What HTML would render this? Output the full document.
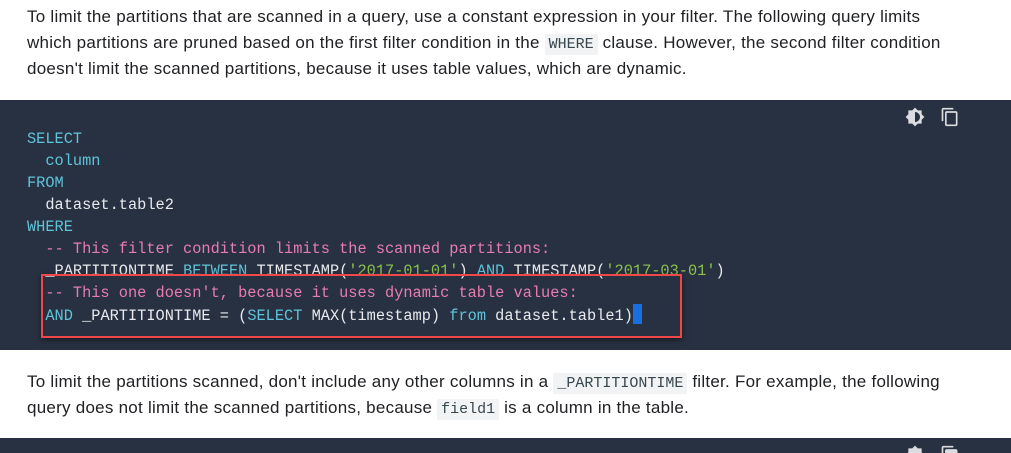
<!DOCTYPE html>
<html><head><meta charset="utf-8"><style>
*{margin:0;padding:0;box-sizing:border-box}
body{width:1011px;height:453px;overflow:hidden;background:#fff;font-family:"Liberation Sans",Roboto,sans-serif;color:#3c4043;position:relative}
.p{position:absolute;left:27px;font-size:17px;letter-spacing:0.25px;line-height:26px;white-space:nowrap;color:#202124}
.ic{font-family:"Liberation Mono",monospace;font-size:15px;letter-spacing:0;background:#f1f3f4;color:#37474f;padding:2px 4px;border-radius:2px}
.code{position:absolute;left:0;width:1011px;background:#283142;overflow:hidden}
.cl{position:absolute;left:27px;font-family:"Liberation Mono",monospace;font-size:15.3px;line-height:22px;white-space:pre;color:#e8eaed}
.k{color:#5fc4d9}.c{color:#e77cb0}.s{color:#8bc34a}
.box{position:absolute;left:41px;top:274px;width:641px;height:64px;border:2px solid #f04848;box-shadow:0 2px 6px rgba(0,0,0,.5)}
.cur{display:inline-block;width:9px;height:20px;background:#1a6fe0;vertical-align:-4px}
</style></head><body>
<div class="p" style="top:4px">To limit the partitions that are scanned in a query, use a constant expression in your filter. The following query limits</div>
<div class="p" style="top:30px">which partitions are pruned based on the first filter condition in the <span class="ic">WHERE</span> clause. However, the second filter condition</div>
<div class="p" style="top:56px">doesn't limit the scanned partitions, because it uses table values, which are dynamic.</div>
<div class="code" style="top:100px;height:250px">
<svg style="position:absolute;left:905px;top:7px" width="20" height="20" viewBox="0 0 24 24"><path fill="#dadce0" d="M20 8.69V4h-4.69L12 .69 8.69 4H4v4.69L.69 12 4 15.31V20h4.69L12 23.31 15.31 20H20v-4.69L23.31 12 20 8.69zM12 18V6c3.31 0 6 2.690 6 6s-2.69 6-6 6z"/></svg>
<svg style="position:absolute;left:940px;top:7px" width="20" height="20" viewBox="0 0 24 24"><path fill="#dadce0" d="M16 1H4c-1.1 0-2 .9-2 2v14h2V3h12V1zm3 4H8c-1.1 0-2 .9-2 2v14c0 1.1.9 2 2 2h11c1.1 0 2-.9 2-2V7c0-1.1-.9-2-2-2zm0 16H8V7h11v14z"/></svg>
</div>
<div class="cl" style="top:128px"><span class="k">SELECT</span>
  <span class="k">column</span>
<span class="k">FROM</span>
  dataset.table2
<span class="k">WHERE</span>
  <span class="c">-- This filter condition limits the scanned partitions:</span>
  _PARTITIONTIME <span class="k">BETWEEN</span> TIMESTAMP(<span class="s">'2017-01-01'</span>) <span class="k">AND</span> TIMESTAMP(<span class="s">'2017-03-01'</span>)
  <span class="c">-- This one doesn't, because it uses dynamic table values:</span>
  <span class="k">AND</span> _PARTITIONTIME = (<span class="k">SELECT</span> MAX(timestamp) <span class="k">from</span> dataset.table1)<span class="cur"></span></div>
<div class="box"></div>
<div class="p" style="top:369px">To limit the partitions scanned, don't include any other columns in a <span class="ic">_PARTITIONTIME</span> filter. For example, the following</div>
<div class="p" style="top:395px">query does not limit the scanned partitions, because <span class="ic">field1</span> is a column in the table.</div>
<div class="code" style="top:438px;height:15px">
<svg style="position:absolute;left:905px;top:7px" width="20" height="20" viewBox="0 0 24 24"><path fill="#dadce0" d="M20 8.69V4h-4.69L12 .69 8.69 4H4v4.69L.69 12 4 15.31V20h4.69L12 23.31 15.31 20H20v-4.69L23.31 12 20 8.69z"/></svg>
<svg style="position:absolute;left:940px;top:7px" width="20" height="20" viewBox="0 0 24 24"><path fill="#dadce0" d="M16 1H4c-1.1 0-2 .9-2 2v14h2V3h12V1zm3 4H8c-1.1 0-2 .9-2 2v14c0 1.1.9 2 2 2h11c1.1 0 2-.9 2-2V7c0-1.1-.9-2-2-2z"/></svg>
</div>
</body></html>
